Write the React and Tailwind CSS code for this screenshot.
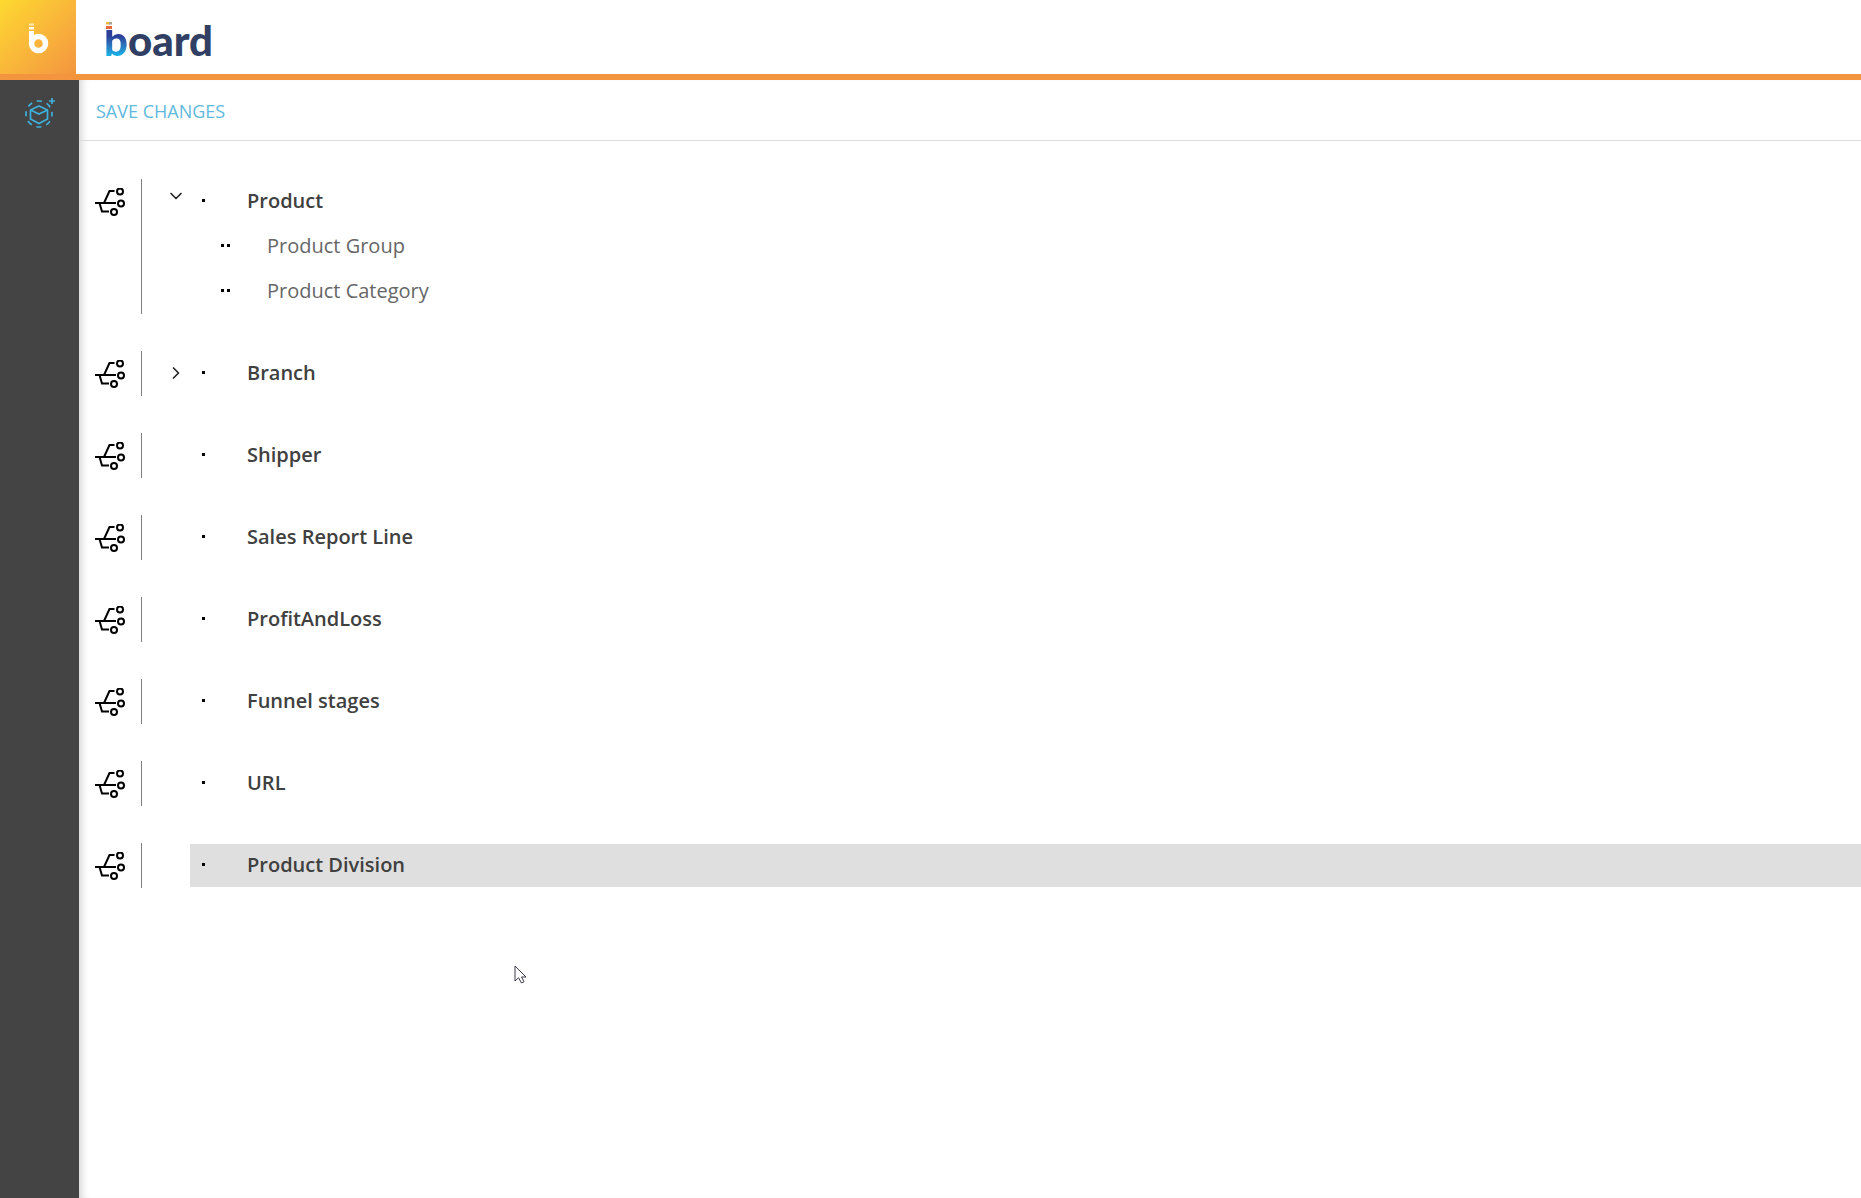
import React, { useState } from 'react';
import { ChevronDown, ChevronRight } from 'lucide-react';

const initialTree = [
  { name: 'Product', children: ['Product Group', 'Product Category'] },
  { name: 'Branch', children: ['Region', 'Country'] },
  { name: 'Shipper' },
  { name: 'Sales Report Line' },
  { name: 'ProfitAndLoss' },
  { name: 'Funnel stages' },
  { name: 'URL' },
  { name: 'Product Division' },
];

const BrandMark = () => (
  <svg width="22" height="32" viewBox="0 0 22 32" fill="none" aria-hidden="true">
    <rect x="2" y="1.500" width="5" height="2" fill="#fff" fillOpacity="0.65" />
    <rect x="2" y="5" width="5" height="2.500" fill="#fff" fillOpacity="0.9" />
    <path d="M2 9h5v13H2z" fill="#fff" />
    <circle cx="11.500" cy="21.500" r="7" stroke="#fff" strokeWidth="5.500" />
  </svg>
);

// coloured bars that top the stem of the "b"
const LogoBars = () => (
  <svg className="absolute left-[29px] top-[22px]" width="8" height="8" viewBox="0 0 8 8" aria-hidden="true">
    <rect width="8" height="8" fill="#fff" />
    <rect x="1" width="4" height="2.500" fill="#f2b63c" />
    <rect x="4" width="3" height="2.500" fill="#a9a39b" />
    <rect x="1" y="4" width="6" height="3" fill="#e8673a" />
  </svg>
);

const CubeIcon = () => (
  <svg width="32" height="32" viewBox="0 0 32 32" fill="none" stroke="#3fb0dc" strokeWidth="1.700" aria-hidden="true">
    <circle cx="15" cy="17" r="13" strokeDasharray="5.2 5.01" strokeDashoffset="2.6" />
    <path d="M15 9l8.500 4v9l-8.500 4.500-8.500-4.500v-9z" />
    <path d="M6.500 13l8.500 4 8.500-4" />
    <path d="M28 1v6M25 4h6" />
  </svg>
);

const HierarchyIcon = () => (
  <svg width="30" height="28" viewBox="0 0 30 28" fill="none" stroke="#000" strokeWidth="2" aria-hidden="true">
    <path d="M0 15h21" />
    <path d="M9 15l5.500-12h5" />
    <path d="M4.500 15l2.500 8.500h7" />
    <circle cx="25" cy="3.500" r="3" />
    <circle cx="26" cy="15.500" r="3" />
    <circle cx="19" cy="24" r="3" />
  </svg>
);

const Pointer = () => (
  <svg className="absolute left-[514px] top-[965px] pointer-events-none" width="13" height="20" viewBox="0 0 13 20" aria-hidden="true">
    <path d="M1 1v15l3.500-3.200 3 5.200 2.500-1.300-2.500-4.700H12z" fill="#fff" stroke="#3a3a48" strokeLinejoin="round" />
  </svg>
);

const TreeGroup = ({ item, open, selected, onToggle }) => {
  const Chevron = open ? ChevronDown : ChevronRight;

  return (
    <li className="flex">
      <div className="w-[46px] pt-[9px] shrink-0">
        <HierarchyIcon />
      </div>
      <div className="w-[49px] shrink-0 border-l border-[#808080] flex items-start justify-center">
        {item.children && (
          <button
            onClick={onToggle}
            aria-label={`Toggle ${item.name}`}
            className={open ? 'h-[34px] pl-5 cursor-pointer' : 'h-11 pl-5 cursor-pointer'}
          >
            <Chevron size={20} strokeWidth={2} color="#222" />
          </button>
        )}
      </div>
      <div className="flex-1">
        <div className="h-[45px] py-px">
          <div className={`h-full flex items-center pl-3 pb-0.5 ${selected ? 'bg-[#dfdfdf]' : ''}`}>
            <span className="size-[3px] bg-black mr-[42px]" />
            <span className="font-semibold">{item.name}</span>
          </div>
        </div>
        {open && (
          <ul>
            {item.children.map((child) => (
              <li key={child} className="h-[45px] pb-0.5 flex items-center pl-[31px] text-[#666]">
                <span className="size-[3px] bg-black mr-[3px]" />
                <span className="size-[3px] bg-black mr-[37px]" />
                {child}
              </li>
            ))}
          </ul>
        )}
      </div>
    </li>
  );
};

const App = () => {
  const [openItems, setOpenItems] = useState(['Product']);

  const toggle = (name) => {
    setOpenItems(openItems.includes(name) ? openItems.filter((n) => n !== name) : [...openItems, name]);
  };

  return (
    <div className="relative min-h-screen flex flex-col bg-white text-[#404040] font-['Open_Sans',sans-serif]">
      <header className="h-20 flex border-b-6 border-[#f3953f]">
        <a href="#home" aria-label="Home" className="w-[76px] pt-0.5 flex items-center justify-center bg-linear-to-br from-[#fdd92f] to-[#f3953f]">
          <BrandMark />
        </a>
        <div className="relative flex items-center pl-7 pt-1.5 font-['Lato',sans-serif] font-black text-[42px] leading-10 text-[#303f63]">
          <span className="bg-linear-to-b from-[#2b3f98] from-40% to-[#12b5ea] to-90% bg-clip-text text-transparent">b</span>oard
          <LogoBars />
        </div>
      </header>
      <div className="flex-1 flex">
        <aside className="w-[79px] shrink-0 bg-[#444] flex items-start justify-center pt-[17px]">
          <button aria-label="New cube" className="cursor-pointer">
            <CubeIcon />
          </button>
        </aside>
        <main className="flex-1 shadow-[inset_8px_0_8px_-6px_#00000033]">
          <div className="h-[61px] pt-0.5 flex items-center px-[17px] border-b border-[#dcdcdc]">
            <button className="text-lg text-[#5fb9dc] cursor-pointer">SAVE CHANGES</button>
          </div>
          <ul className="flex flex-col gap-[37px] pt-[38px] pl-4 text-xl">
            {initialTree.map((item) => (
              <TreeGroup
                key={item.name}
                item={item}
                open={openItems.includes(item.name)}
                selected={item.name === 'Product Division'}
                onToggle={() => toggle(item.name)}
              />
            ))}
          </ul>
        </main>
      </div>
      <Pointer />
    </div>
  );
};

export default App;
